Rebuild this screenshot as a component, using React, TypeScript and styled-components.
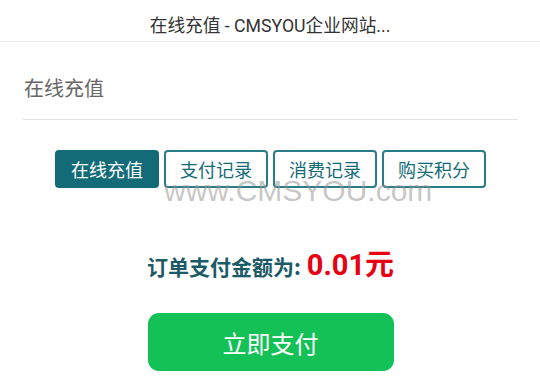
import React from "react";
import styled, { createGlobalStyle } from "styled-components";

const GlobalStyle = createGlobalStyle`
  html, body {
    margin: 0;
    padding: 0;
    background: #ffffff;
  }
  body {
    font-family: "Noto Sans CJK SC", "Roboto", "Noto Sans", sans-serif;
  }
`;

const Page = styled.div`
  width: 540px;
  height: 392px;
  overflow: hidden;
  position: relative;
  background: #ffffff;
`;

const Header = styled.header`
  height: 42px;
  border-bottom: 1px solid #ececec;
  display: flex;
  align-items: center;
  justify-content: center;
  font-size: 17.7px;
  color: #333333;
  font-family: "Roboto", "Noto Sans CJK SC", sans-serif;
  padding-top: 6px;
  box-sizing: border-box;
`;

const Content = styled.main`
  padding: 0 22px 0 23px;
`;

const Heading = styled.h2`
  margin: 0;
  height: 78px;
  display: flex;
  align-items: center;
  padding-left: 1px;
  padding-top: 14px;
  box-sizing: border-box;
  font-size: 20px;
  font-weight: 400;
  color: #666666;
  border-bottom: 1px solid #e2e2e2;
`;

const Tabs = styled.nav`
  display: flex;
  justify-content: center;
  gap: 5px;
  margin-top: 30px;
`;

const Tab = styled.button<{ $active?: boolean }>`
  width: 104px;
  height: 38px;
  border-radius: 4px;
  box-sizing: border-box;
  font-family: "Noto Sans CJK SC", sans-serif;
  font-size: 18px;
  display: flex;
  align-items: center;
  justify-content: center;
  padding: 0;
  cursor: pointer;
  ${({ $active }) =>
    $active
      ? `
    background: #136b78;
    color: #ffffff;
    border: 2px solid #136b78;
  `
      : `
    background: #ffffff;
    color: #136b78;
    border: 2px solid #2a7c86;
  `}
`;

const Watermark = styled.div`
  position: absolute;
  left: 164px;
  top: 174px;
  font-family: "Liberation Sans", "Roboto", sans-serif;
  font-size: 30px;
  color: rgba(150, 150, 150, 0.55);
  pointer-events: none;
`;

const Amount = styled.div`
  margin-top: 53px;
  display: flex;
  align-items: baseline;
  justify-content: center;
  color: #1b5a66;
  font-size: 21px;
  font-weight: 700;
`;

const Price = styled.span`
  color: #e60012;
  font-size: 29px;
  font-weight: 700;
  margin-left: 6px;
  font-family: "Roboto", "Noto Sans CJK SC", sans-serif;
`;

const PayButton = styled.button`
  display: block;
  margin: 30px auto 0;
  width: 246px;
  height: 58px;
  border: none;
  border-radius: 11px;
  background: #14c156;
  color: #ffffff;
  font-family: "Noto Sans CJK SC", sans-serif;
  font-size: 24px;
  cursor: pointer;
`;

const tabs = ["在线充值", "支付记录", "消费记录", "购买积分"];

export default function App() {
  return (
    <Page>
      <GlobalStyle />
      <Header>在线充值 - CMSYOU企业网站...</Header>
      <Content>
        <Heading>在线充值</Heading>
        <Tabs>
          {tabs.map((t, i) => (
            <Tab key={t} $active={i === 0}>
              {t}
            </Tab>
          ))}
        </Tabs>
        <Amount>
          订单支付金额为:<Price>0.01元</Price>
        </Amount>
        <PayButton>立即支付</PayButton>
      </Content>
      <Watermark>www.CMSYOU.com</Watermark>
    </Page>
  );
}
